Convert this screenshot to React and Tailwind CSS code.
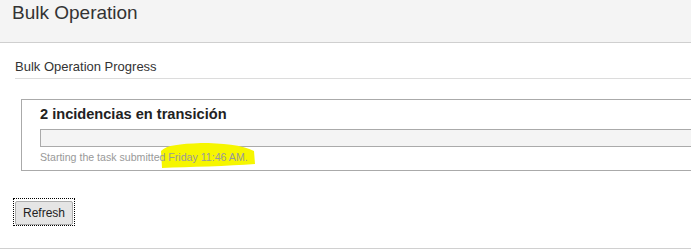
import React from "react";

function Highlight() {
  // hand-drawn marker stroke over the timestamp
  return (
    <svg
      className="absolute left-[137px] top-[41px] z-0"
      width="98"
      height="28"
      viewBox="0 0 98 28"
    >
      <path
        d="M2 10 C 8 4, 20 3, 42 2 C 62 2, 84 4, 95 10 L 96 23 C 70 25, 30 26, 3 27 Z"
        fill="#f6f600"
      />
    </svg>
  );
}

export default function App() {
  return (
    <div className="w-[691px] h-[250px] overflow-hidden bg-white text-[#333] font-['Liberation_Sans',Arial,sans-serif]">
      {/* Page header */}
      <div className="h-[43px] bg-[#f4f4f4] border-b border-[#cfcfcf] pl-[12px] pt-[2px] text-[19px] leading-[22px]">
        Bulk Operation
      </div>

      {/* Section title */}
      <div className="ml-[15px] mt-[16px] pb-[4px] border-b border-[#dcdcdc] text-[13px] leading-[15px]">
        Bulk Operation Progress
      </div>

      {/* Progress box */}
      <div className="relative ml-[21px] mt-[20px] w-[720px] h-[72px] border border-[#aaa] pl-[18px] pt-[6px]">
        <div className="text-[14.6px] leading-[17px] font-bold text-[#222]">2 incidencias en transición</div>
        <div className="mt-[6px] h-[18px] border border-[#aaa] bg-[#f4f4f4]" />
        <Highlight />
        <div className="relative z-10 mt-[4px] text-[10.6px] leading-[13px] text-[#999]">
          Starting the task submitted Friday 11:46 AM.
        </div>
      </div>

      {/* Refresh */}
      <div className="ml-[13px] mt-[27px] w-[62px] h-[28px] border border-dotted border-black p-[1px]">
        <button className="w-full h-full rounded-[2px] border border-[#adadad] bg-[#e5e5e5] text-[12px] text-[#222]">
          Refresh
        </button>
      </div>

      <div className="mt-[22px] border-t border-[#d0d0d0]" />
    </div>
  );
}
